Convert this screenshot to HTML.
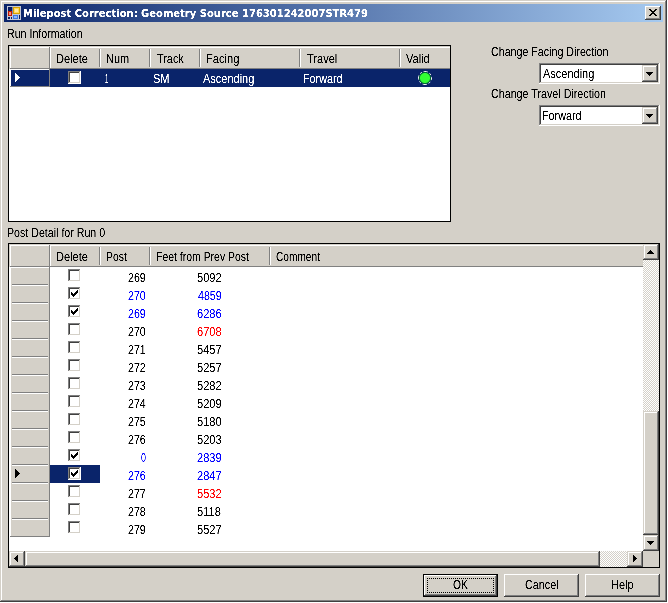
<!DOCTYPE html><html><head><meta charset='utf-8'><title>Milepost Correction</title><style>
html,body{margin:0;padding:0;background:#fff;overflow:hidden}body{width:668px;height:603px;position:relative;font-family:'Liberation Sans',sans-serif}div,span{box-sizing:border-box}.t{position:absolute;white-space:pre;font-size:12.5px;line-height:16px;transform-origin:0 0;}.tb{font-size:11px;font-weight:bold;font-family:'DejaVu Sans Condensed','DejaVu Sans','Liberation Sans',sans-serif;font-stretch:condensed}.chk{background-image:conic-gradient(#fff 25%,#d4d0c8 0 50%,#fff 0 75%,#d4d0c8 0);background-size:2px 2px}
</style></head><body>
<div class="window">
<div style="position:absolute;left:0px;top:0px;width:667px;height:602px;background:#d4d0c8;box-shadow:inset -1px -1px #404040,inset 1px 1px #d4d0c8,inset -2px -2px #808080,inset 2px 2px #fff;"></div>
<div class="titlebar">
<div style="position:absolute;left:4px;top:4px;width:659px;height:18px;background:linear-gradient(90deg,#0a246a,#a6caf0);"></div>
<svg style="position:absolute;left:6px;top:5px" width="16" height="16" viewBox="0 0 16 16" shape-rendering="crispEdges"><rect x="1" y="1" width="14" height="14" fill="#c4c8d4"/><rect x="2" y="2" width="4" height="4" fill="#0a1c62"/><rect x="6" y="2" width="1" height="7" fill="#7c86ac"/><rect x="7" y="2" width="7" height="7" fill="#d8a200"/><rect x="8" y="3" width="5" height="5" fill="#ffd85a"/><rect x="9" y="4" width="3" height="3" fill="#ffeaa6"/><rect x="2" y="6" width="4" height="5" fill="#c41800"/><rect x="3" y="7" width="2" height="3" fill="#f0907c"/><rect x="7" y="10" width="5" height="4" fill="#3c78e0"/><rect x="8" y="11" width="3" height="2" fill="#8cb6ff"/><rect x="2" y="12" width="2" height="2" fill="#0a1c62"/><rect x="5" y="12" width="1" height="2" fill="#0a1c62"/><rect x="13" y="10" width="1" height="4" fill="#0a1c62"/></svg>
<div style="position:absolute;left:645px;top:6px;width:16px;height:14px;background:#d4d0c8;box-shadow:inset -1px -1px #404040,inset 1px 1px #fff,inset -2px -2px #808080,inset 2px 2px #d4d0c8;"></div>
<svg style="position:absolute;left:649px;top:9px" width="8" height="7" viewBox="0 0 8 7" shape-rendering="crispEdges"><path d="M0 0h2v1h1v1h2v-1h1v-1h2v1h-1v1h-1v1h-1v1h1v1h1v1h1v1h-2v-1h-1v-1h-2v1h-1v1h-2v-1h1v-1h1v-1h1v-1h-1v-1h-1v-1h-1z" fill="#000"/></svg>
</div><div class="grid run-information">
<div style="position:absolute;left:8px;top:45px;width:443px;height:177px;background:#fff;border:1px solid #000;"></div>
<div style="position:absolute;left:9px;top:46px;width:441px;height:23px;background:#d4d0c8;"></div><div style="position:absolute;left:10px;top:47px;width:40px;height:22px;background:#d4d0c8;box-shadow:inset -1px -1px #808080,inset 1px 1px #fff;"></div><div style="position:absolute;left:50px;top:47px;width:400px;height:22px;background:#d4d0c8;box-shadow:inset 0 -1px #808080,inset 1px 1px #fff;"></div><div style="position:absolute;left:99px;top:49px;width:1px;height:18px;background:#808080;"></div><div style="position:absolute;left:100px;top:49px;width:1px;height:18px;background:#fff;"></div><div style="position:absolute;left:149px;top:49px;width:1px;height:18px;background:#808080;"></div><div style="position:absolute;left:150px;top:49px;width:1px;height:18px;background:#fff;"></div><div style="position:absolute;left:199px;top:49px;width:1px;height:18px;background:#808080;"></div><div style="position:absolute;left:200px;top:49px;width:1px;height:18px;background:#fff;"></div><div style="position:absolute;left:299px;top:49px;width:1px;height:18px;background:#808080;"></div><div style="position:absolute;left:300px;top:49px;width:1px;height:18px;background:#fff;"></div><div style="position:absolute;left:399px;top:49px;width:1px;height:18px;background:#808080;"></div><div style="position:absolute;left:400px;top:49px;width:1px;height:18px;background:#fff;"></div>
<div style="position:absolute;left:50px;top:69px;width:400px;height:18px;background:#0a246a;"></div>
<div style="position:absolute;left:10px;top:69px;width:40px;height:18px;background:#0a246a;box-shadow:inset -1px -1px #808080,inset 1px 1px #fff;"></div>
<div style="position:absolute;left:15px;top:73px;width:1px;height:9px;background:#fff;"></div><div style="position:absolute;left:16px;top:74px;width:1px;height:7px;background:#fff;"></div><div style="position:absolute;left:17px;top:75px;width:1px;height:5px;background:#fff;"></div><div style="position:absolute;left:18px;top:76px;width:1px;height:3px;background:#fff;"></div><div style="position:absolute;left:19px;top:77px;width:1px;height:1px;background:#fff;"></div>
<div style="position:absolute;left:68px;top:71px;width:13px;height:13px;background:#fff;box-shadow:inset -1px -1px #fff,inset 1px 1px #808080,inset -2px -2px #d4d0c8,inset 2px 2px #404040;"></div>
<svg style="position:absolute;left:416px;top:69px" width="18" height="18" viewBox="0 0 18 18"><circle cx="9" cy="9" r="6.5" fill="none" stroke="#fff" stroke-width="1" stroke-dasharray="4.4 1.9 2 1.91" stroke-dashoffset="2.2"/><circle cx="9" cy="9" r="5.6" fill="#3f3" stroke="#063" stroke-width="1"/></svg>
</div><div class="combos">
<div style="position:absolute;left:539px;top:63px;width:121px;height:21px;background:#fff;box-shadow:inset -1px -1px #fff,inset 1px 1px #808080,inset -2px -2px #d4d0c8,inset 2px 2px #404040;"></div>
<div style="position:absolute;left:642px;top:65px;width:16px;height:17px;background:#d4d0c8;box-shadow:inset -1px -1px #404040,inset 1px 1px #d4d0c8,inset -2px -2px #808080,inset 2px 2px #fff;"></div>
<div style="position:absolute;left:646px;top:72px;width:7px;height:1px;background:#000;"></div><div style="position:absolute;left:647px;top:73px;width:5px;height:1px;background:#000;"></div><div style="position:absolute;left:648px;top:74px;width:3px;height:1px;background:#000;"></div><div style="position:absolute;left:649px;top:75px;width:1px;height:1px;background:#000;"></div>
<div style="position:absolute;left:539px;top:105px;width:121px;height:21px;background:#fff;box-shadow:inset -1px -1px #fff,inset 1px 1px #808080,inset -2px -2px #d4d0c8,inset 2px 2px #404040;"></div>
<div style="position:absolute;left:642px;top:107px;width:16px;height:17px;background:#d4d0c8;box-shadow:inset -1px -1px #404040,inset 1px 1px #d4d0c8,inset -2px -2px #808080,inset 2px 2px #fff;"></div>
<div style="position:absolute;left:646px;top:114px;width:7px;height:1px;background:#000;"></div><div style="position:absolute;left:647px;top:115px;width:5px;height:1px;background:#000;"></div><div style="position:absolute;left:648px;top:116px;width:3px;height:1px;background:#000;"></div><div style="position:absolute;left:649px;top:117px;width:1px;height:1px;background:#000;"></div>
</div><div class="grid post-detail">
<div style="position:absolute;left:8px;top:243px;width:652px;height:325px;background:#fff;border:1px solid #000;"></div>
<div style="position:absolute;left:9px;top:244px;width:634px;height:23px;background:#d4d0c8;"></div><div style="position:absolute;left:10px;top:245px;width:40px;height:22px;background:#d4d0c8;box-shadow:inset -1px -1px #808080,inset 1px 1px #fff;"></div><div style="position:absolute;left:50px;top:245px;width:593px;height:22px;background:#d4d0c8;box-shadow:inset 0 -1px #808080,inset 1px 1px #fff;"></div><div style="position:absolute;left:99px;top:247px;width:1px;height:18px;background:#808080;"></div><div style="position:absolute;left:100px;top:247px;width:1px;height:18px;background:#fff;"></div><div style="position:absolute;left:149px;top:247px;width:1px;height:18px;background:#808080;"></div><div style="position:absolute;left:150px;top:247px;width:1px;height:18px;background:#fff;"></div><div style="position:absolute;left:269px;top:247px;width:1px;height:18px;background:#808080;"></div><div style="position:absolute;left:270px;top:247px;width:1px;height:18px;background:#fff;"></div>
<div style="position:absolute;left:10px;top:267px;width:40px;height:270px;background:#d4d0c8;box-shadow:inset -1px -1px #808080,inset 1px 1px #fff;"></div>
<div style="position:absolute;left:12px;top:284px;width:36px;height:1px;background:#808080;"></div><div style="position:absolute;left:12px;top:285px;width:36px;height:1px;background:#fff;"></div>
<div style="position:absolute;left:68px;top:269px;width:13px;height:13px;background:#fff;box-shadow:inset -1px -1px #fff,inset 1px 1px #808080,inset -2px -2px #d4d0c8,inset 2px 2px #404040;"></div>
<div style="position:absolute;left:12px;top:302px;width:36px;height:1px;background:#808080;"></div><div style="position:absolute;left:12px;top:303px;width:36px;height:1px;background:#fff;"></div>
<div style="position:absolute;left:68px;top:287px;width:13px;height:13px;background:#fff;box-shadow:inset -1px -1px #fff,inset 1px 1px #808080,inset -2px -2px #d4d0c8,inset 2px 2px #404040;"></div><div style="position:absolute;left:71px;top:292px;width:1px;height:3px;background:#000;"></div><div style="position:absolute;left:72px;top:293px;width:1px;height:3px;background:#000;"></div><div style="position:absolute;left:73px;top:294px;width:1px;height:3px;background:#000;"></div><div style="position:absolute;left:74px;top:293px;width:1px;height:3px;background:#000;"></div><div style="position:absolute;left:75px;top:292px;width:1px;height:3px;background:#000;"></div><div style="position:absolute;left:76px;top:291px;width:1px;height:3px;background:#000;"></div><div style="position:absolute;left:77px;top:290px;width:1px;height:3px;background:#000;"></div>
<div style="position:absolute;left:12px;top:320px;width:36px;height:1px;background:#808080;"></div><div style="position:absolute;left:12px;top:321px;width:36px;height:1px;background:#fff;"></div>
<div style="position:absolute;left:68px;top:305px;width:13px;height:13px;background:#fff;box-shadow:inset -1px -1px #fff,inset 1px 1px #808080,inset -2px -2px #d4d0c8,inset 2px 2px #404040;"></div><div style="position:absolute;left:71px;top:310px;width:1px;height:3px;background:#000;"></div><div style="position:absolute;left:72px;top:311px;width:1px;height:3px;background:#000;"></div><div style="position:absolute;left:73px;top:312px;width:1px;height:3px;background:#000;"></div><div style="position:absolute;left:74px;top:311px;width:1px;height:3px;background:#000;"></div><div style="position:absolute;left:75px;top:310px;width:1px;height:3px;background:#000;"></div><div style="position:absolute;left:76px;top:309px;width:1px;height:3px;background:#000;"></div><div style="position:absolute;left:77px;top:308px;width:1px;height:3px;background:#000;"></div>
<div style="position:absolute;left:12px;top:338px;width:36px;height:1px;background:#808080;"></div><div style="position:absolute;left:12px;top:339px;width:36px;height:1px;background:#fff;"></div>
<div style="position:absolute;left:68px;top:323px;width:13px;height:13px;background:#fff;box-shadow:inset -1px -1px #fff,inset 1px 1px #808080,inset -2px -2px #d4d0c8,inset 2px 2px #404040;"></div>
<div style="position:absolute;left:12px;top:356px;width:36px;height:1px;background:#808080;"></div><div style="position:absolute;left:12px;top:357px;width:36px;height:1px;background:#fff;"></div>
<div style="position:absolute;left:68px;top:341px;width:13px;height:13px;background:#fff;box-shadow:inset -1px -1px #fff,inset 1px 1px #808080,inset -2px -2px #d4d0c8,inset 2px 2px #404040;"></div>
<div style="position:absolute;left:12px;top:374px;width:36px;height:1px;background:#808080;"></div><div style="position:absolute;left:12px;top:375px;width:36px;height:1px;background:#fff;"></div>
<div style="position:absolute;left:68px;top:359px;width:13px;height:13px;background:#fff;box-shadow:inset -1px -1px #fff,inset 1px 1px #808080,inset -2px -2px #d4d0c8,inset 2px 2px #404040;"></div>
<div style="position:absolute;left:12px;top:392px;width:36px;height:1px;background:#808080;"></div><div style="position:absolute;left:12px;top:393px;width:36px;height:1px;background:#fff;"></div>
<div style="position:absolute;left:68px;top:377px;width:13px;height:13px;background:#fff;box-shadow:inset -1px -1px #fff,inset 1px 1px #808080,inset -2px -2px #d4d0c8,inset 2px 2px #404040;"></div>
<div style="position:absolute;left:12px;top:410px;width:36px;height:1px;background:#808080;"></div><div style="position:absolute;left:12px;top:411px;width:36px;height:1px;background:#fff;"></div>
<div style="position:absolute;left:68px;top:395px;width:13px;height:13px;background:#fff;box-shadow:inset -1px -1px #fff,inset 1px 1px #808080,inset -2px -2px #d4d0c8,inset 2px 2px #404040;"></div>
<div style="position:absolute;left:12px;top:428px;width:36px;height:1px;background:#808080;"></div><div style="position:absolute;left:12px;top:429px;width:36px;height:1px;background:#fff;"></div>
<div style="position:absolute;left:68px;top:413px;width:13px;height:13px;background:#fff;box-shadow:inset -1px -1px #fff,inset 1px 1px #808080,inset -2px -2px #d4d0c8,inset 2px 2px #404040;"></div>
<div style="position:absolute;left:12px;top:446px;width:36px;height:1px;background:#808080;"></div><div style="position:absolute;left:12px;top:447px;width:36px;height:1px;background:#fff;"></div>
<div style="position:absolute;left:68px;top:431px;width:13px;height:13px;background:#fff;box-shadow:inset -1px -1px #fff,inset 1px 1px #808080,inset -2px -2px #d4d0c8,inset 2px 2px #404040;"></div>
<div style="position:absolute;left:12px;top:464px;width:36px;height:1px;background:#808080;"></div><div style="position:absolute;left:12px;top:465px;width:36px;height:1px;background:#fff;"></div>
<div style="position:absolute;left:68px;top:449px;width:13px;height:13px;background:#fff;box-shadow:inset -1px -1px #fff,inset 1px 1px #808080,inset -2px -2px #d4d0c8,inset 2px 2px #404040;"></div><div style="position:absolute;left:71px;top:454px;width:1px;height:3px;background:#000;"></div><div style="position:absolute;left:72px;top:455px;width:1px;height:3px;background:#000;"></div><div style="position:absolute;left:73px;top:456px;width:1px;height:3px;background:#000;"></div><div style="position:absolute;left:74px;top:455px;width:1px;height:3px;background:#000;"></div><div style="position:absolute;left:75px;top:454px;width:1px;height:3px;background:#000;"></div><div style="position:absolute;left:76px;top:453px;width:1px;height:3px;background:#000;"></div><div style="position:absolute;left:77px;top:452px;width:1px;height:3px;background:#000;"></div>
<div style="position:absolute;left:12px;top:482px;width:36px;height:1px;background:#808080;"></div><div style="position:absolute;left:12px;top:483px;width:36px;height:1px;background:#fff;"></div>
<div style="position:absolute;left:50px;top:465px;width:50px;height:18px;background:#0a246a;"></div>
<div style="position:absolute;left:15px;top:469px;width:1px;height:9px;background:#000;"></div><div style="position:absolute;left:16px;top:470px;width:1px;height:7px;background:#000;"></div><div style="position:absolute;left:17px;top:471px;width:1px;height:5px;background:#000;"></div><div style="position:absolute;left:18px;top:472px;width:1px;height:3px;background:#000;"></div><div style="position:absolute;left:19px;top:473px;width:1px;height:1px;background:#000;"></div>
<div style="position:absolute;left:68px;top:467px;width:13px;height:13px;background:#fff;box-shadow:inset -1px -1px #fff,inset 1px 1px #808080,inset -2px -2px #d4d0c8,inset 2px 2px #404040;"></div><div style="position:absolute;left:71px;top:472px;width:1px;height:3px;background:#000;"></div><div style="position:absolute;left:72px;top:473px;width:1px;height:3px;background:#000;"></div><div style="position:absolute;left:73px;top:474px;width:1px;height:3px;background:#000;"></div><div style="position:absolute;left:74px;top:473px;width:1px;height:3px;background:#000;"></div><div style="position:absolute;left:75px;top:472px;width:1px;height:3px;background:#000;"></div><div style="position:absolute;left:76px;top:471px;width:1px;height:3px;background:#000;"></div><div style="position:absolute;left:77px;top:470px;width:1px;height:3px;background:#000;"></div>
<div style="position:absolute;left:12px;top:500px;width:36px;height:1px;background:#808080;"></div><div style="position:absolute;left:12px;top:501px;width:36px;height:1px;background:#fff;"></div>
<div style="position:absolute;left:68px;top:485px;width:13px;height:13px;background:#fff;box-shadow:inset -1px -1px #fff,inset 1px 1px #808080,inset -2px -2px #d4d0c8,inset 2px 2px #404040;"></div>
<div style="position:absolute;left:12px;top:518px;width:36px;height:1px;background:#808080;"></div><div style="position:absolute;left:12px;top:519px;width:36px;height:1px;background:#fff;"></div>
<div style="position:absolute;left:68px;top:503px;width:13px;height:13px;background:#fff;box-shadow:inset -1px -1px #fff,inset 1px 1px #808080,inset -2px -2px #d4d0c8,inset 2px 2px #404040;"></div>
<div style="position:absolute;left:68px;top:521px;width:13px;height:13px;background:#fff;box-shadow:inset -1px -1px #fff,inset 1px 1px #808080,inset -2px -2px #d4d0c8,inset 2px 2px #404040;"></div>
<div class="chk" style="position:absolute;left:643px;top:244px;width:16px;height:307px;"></div>
<div style="position:absolute;left:643px;top:244px;width:16px;height:16px;background:#d4d0c8;box-shadow:inset -1px -1px #404040,inset 1px 1px #d4d0c8,inset -2px -2px #808080,inset 2px 2px #fff;"></div>
<div style="position:absolute;left:650px;top:250px;width:1px;height:1px;background:#000;"></div><div style="position:absolute;left:649px;top:251px;width:3px;height:1px;background:#000;"></div><div style="position:absolute;left:648px;top:252px;width:5px;height:1px;background:#000;"></div><div style="position:absolute;left:647px;top:253px;width:7px;height:1px;background:#000;"></div>
<div style="position:absolute;left:643px;top:411px;width:16px;height:124px;background:#d4d0c8;box-shadow:inset -1px -1px #404040,inset 1px 1px #d4d0c8,inset -2px -2px #808080,inset 2px 2px #fff;"></div>
<div style="position:absolute;left:643px;top:535px;width:16px;height:16px;background:#d4d0c8;box-shadow:inset -1px -1px #404040,inset 1px 1px #d4d0c8,inset -2px -2px #808080,inset 2px 2px #fff;"></div>
<div style="position:absolute;left:647px;top:541px;width:7px;height:1px;background:#000;"></div><div style="position:absolute;left:648px;top:542px;width:5px;height:1px;background:#000;"></div><div style="position:absolute;left:649px;top:543px;width:3px;height:1px;background:#000;"></div><div style="position:absolute;left:650px;top:544px;width:1px;height:1px;background:#000;"></div>
<div class="chk" style="position:absolute;left:9px;top:551px;width:634px;height:16px;"></div>
<div style="position:absolute;left:9px;top:551px;width:16px;height:16px;background:#d4d0c8;box-shadow:inset -1px -1px #404040,inset 1px 1px #d4d0c8,inset -2px -2px #808080,inset 2px 2px #fff;"></div>
<div style="position:absolute;left:17px;top:555px;width:1px;height:7px;background:#000;"></div><div style="position:absolute;left:16px;top:556px;width:1px;height:5px;background:#000;"></div><div style="position:absolute;left:15px;top:557px;width:1px;height:3px;background:#000;"></div><div style="position:absolute;left:14px;top:558px;width:1px;height:1px;background:#000;"></div>
<div style="position:absolute;left:25px;top:551px;width:575px;height:16px;background:#d4d0c8;box-shadow:inset -1px -1px #404040,inset 1px 1px #d4d0c8,inset -2px -2px #808080,inset 2px 2px #fff;"></div>
<div style="position:absolute;left:627px;top:551px;width:16px;height:16px;background:#d4d0c8;box-shadow:inset -1px -1px #404040,inset 1px 1px #d4d0c8,inset -2px -2px #808080,inset 2px 2px #fff;"></div>
<div style="position:absolute;left:633px;top:555px;width:1px;height:7px;background:#000;"></div><div style="position:absolute;left:634px;top:556px;width:1px;height:5px;background:#000;"></div><div style="position:absolute;left:635px;top:557px;width:1px;height:3px;background:#000;"></div><div style="position:absolute;left:636px;top:558px;width:1px;height:1px;background:#000;"></div>
<div style="position:absolute;left:643px;top:551px;width:16px;height:16px;background:#d4d0c8;"></div>
</div><div class="buttons">
<div style="position:absolute;left:423px;top:574px;width:75px;height:23px;background:#d4d0c8;border:1px solid #000;"></div>
<div style="position:absolute;left:424px;top:575px;width:73px;height:21px;box-shadow:inset -1px -1px #404040,inset 1px 1px #fff,inset -2px -2px #808080,inset 2px 2px #d4d0c8;"></div>
<div style="position:absolute;left:427px;top:578px;width:67px;height:15px;border:1px dotted #000;"></div>
<div style="position:absolute;left:504px;top:574px;width:75px;height:23px;box-shadow:inset -1px -1px #404040,inset 1px 1px #fff,inset -2px -2px #808080,inset 2px 2px #d4d0c8;"></div>
<div style="position:absolute;left:585px;top:574px;width:75px;height:23px;box-shadow:inset -1px -1px #404040,inset 1px 1px #fff,inset -2px -2px #808080,inset 2px 2px #d4d0c8;"></div>
</div></div>
<svg width="0" height="0" style="position:absolute"><defs><filter id="tx" x="0" y="0" width="100%" height="100%" color-interpolation-filters="sRGB"><feComponentTransfer><feFuncA type="linear" slope="2.6" intercept="-0.7"/></feComponentTransfer></filter></defs></svg>
<div style="position:absolute;left:0;top:0;width:668px;height:603px;filter:url(#tx)">
<span class="t tb" style="left:23.19px;top:6px;color:#fff;transform:scaleX(1.0088)">Milepost Correction: Geometry Source 176301242007STR479</span>
<span class="t" style="left:7.35px;top:26px;color:#000;transform:scaleX(0.8506)">Run Information</span>
<span class="t" style="left:56.31px;top:51px;color:#000;transform:scaleX(0.8857)">Delete</span>
<span class="t" style="left:106.32px;top:51px;color:#000;transform:scaleX(0.8800)">Num</span>
<span class="t" style="left:157.20px;top:51px;color:#000;transform:scaleX(0.8710)">Track</span>
<span class="t" style="left:206.31px;top:51px;color:#000;transform:scaleX(0.8889)">Facing</span>
<span class="t" style="left:307.20px;top:51px;color:#000;transform:scaleX(0.8824)">Travel</span>
<span class="t" style="left:406.20px;top:51px;color:#000;transform:scaleX(0.8846)">Valid</span>
<span class="t" style="left:104.70px;top:71px;color:#fff;transform:scaleX(0.5000)">1</span>
<span class="t" style="left:153.32px;top:71px;color:#fff;transform:scaleX(0.8824)">SM</span>
<span class="t" style="left:203.20px;top:71px;color:#fff;transform:scaleX(0.8793)">Ascending</span>
<span class="t" style="left:303.34px;top:71px;color:#fff;transform:scaleX(0.8636)">Forward</span>
<span class="t" style="left:491.35px;top:44px;color:#000;transform:scaleX(0.8529)">Change Facing Direction</span>
<span class="t" style="left:543.20px;top:66px;color:#000;transform:scaleX(0.8793)">Ascending</span>
<span class="t" style="left:491.34px;top:86px;color:#000;transform:scaleX(0.8571)">Change Travel Direction</span>
<span class="t" style="left:542.34px;top:108px;color:#000;transform:scaleX(0.8636)">Forward</span>
<span class="t" style="left:7.35px;top:225px;color:#000;transform:scaleX(0.8509)">Post Detail for Run 0</span>
<span class="t" style="left:56.31px;top:249px;color:#000;transform:scaleX(0.8857)">Delete</span>
<span class="t" style="left:106.37px;top:249px;color:#000;transform:scaleX(0.8333)">Post</span>
<span class="t" style="left:156.36px;top:249px;color:#000;transform:scaleX(0.8364)">Feet from Prev Post</span>
<span class="t" style="left:276.39px;top:249px;color:#000;transform:scaleX(0.8113)">Comment</span>
<span class="t" style="left:128.35px;top:270px;color:#000;transform:scaleX(0.8500)">269</span>
<span class="t" style="left:197.32px;top:270px;color:#000;transform:scaleX(0.8846)">5092</span>
<span class="t" style="left:128.35px;top:288px;color:#00f;transform:scaleX(0.8500)">270</span>
<span class="t" style="left:198.20px;top:288px;color:#00f;transform:scaleX(0.8519)">4859</span>
<span class="t" style="left:128.35px;top:306px;color:#00f;transform:scaleX(0.8500)">269</span>
<span class="t" style="left:197.32px;top:306px;color:#00f;transform:scaleX(0.8846)">6286</span>
<span class="t" style="left:128.35px;top:324px;color:#000;transform:scaleX(0.8500)">270</span>
<span class="t" style="left:197.32px;top:324px;color:#f00;transform:scaleX(0.8846)">6708</span>
<span class="t" style="left:128.35px;top:342px;color:#000;transform:scaleX(0.8500)">271</span>
<span class="t" style="left:197.32px;top:342px;color:#000;transform:scaleX(0.8846)">5457</span>
<span class="t" style="left:128.35px;top:360px;color:#000;transform:scaleX(0.8500)">272</span>
<span class="t" style="left:197.32px;top:360px;color:#000;transform:scaleX(0.8846)">5257</span>
<span class="t" style="left:128.35px;top:378px;color:#000;transform:scaleX(0.8500)">273</span>
<span class="t" style="left:197.32px;top:378px;color:#000;transform:scaleX(0.8846)">5282</span>
<span class="t" style="left:128.35px;top:396px;color:#000;transform:scaleX(0.8500)">274</span>
<span class="t" style="left:197.32px;top:396px;color:#000;transform:scaleX(0.8846)">5209</span>
<span class="t" style="left:128.35px;top:414px;color:#000;transform:scaleX(0.8500)">275</span>
<span class="t" style="left:197.32px;top:414px;color:#000;transform:scaleX(0.8846)">5180</span>
<span class="t" style="left:128.35px;top:432px;color:#000;transform:scaleX(0.8500)">276</span>
<span class="t" style="left:197.32px;top:432px;color:#000;transform:scaleX(0.8846)">5203</span>
<span class="t" style="left:141.20px;top:450px;color:#00f;transform:scaleX(0.7143)">0</span>
<span class="t" style="left:197.32px;top:450px;color:#00f;transform:scaleX(0.8846)">2839</span>
<span class="t" style="left:128.35px;top:468px;color:#00f;transform:scaleX(0.8500)">276</span>
<span class="t" style="left:197.32px;top:468px;color:#00f;transform:scaleX(0.8846)">2847</span>
<span class="t" style="left:128.35px;top:486px;color:#000;transform:scaleX(0.8500)">277</span>
<span class="t" style="left:197.32px;top:486px;color:#f00;transform:scaleX(0.8846)">5532</span>
<span class="t" style="left:128.35px;top:504px;color:#000;transform:scaleX(0.8500)">278</span>
<span class="t" style="left:197.32px;top:504px;color:#000;transform:scaleX(0.8846)">5118</span>
<span class="t" style="left:128.35px;top:522px;color:#000;transform:scaleX(0.8500)">279</span>
<span class="t" style="left:197.32px;top:522px;color:#000;transform:scaleX(0.8846)">5527</span>
<span class="t" style="left:453.38px;top:577px;color:#000;transform:scaleX(0.8235)">OK</span>
<span class="t" style="left:525.34px;top:577px;color:#000;transform:scaleX(0.8649)">Cancel</span>
<span class="t" style="left:611.33px;top:577px;color:#000;transform:scaleX(0.8750)">Help</span>
</div>
</body></html>
